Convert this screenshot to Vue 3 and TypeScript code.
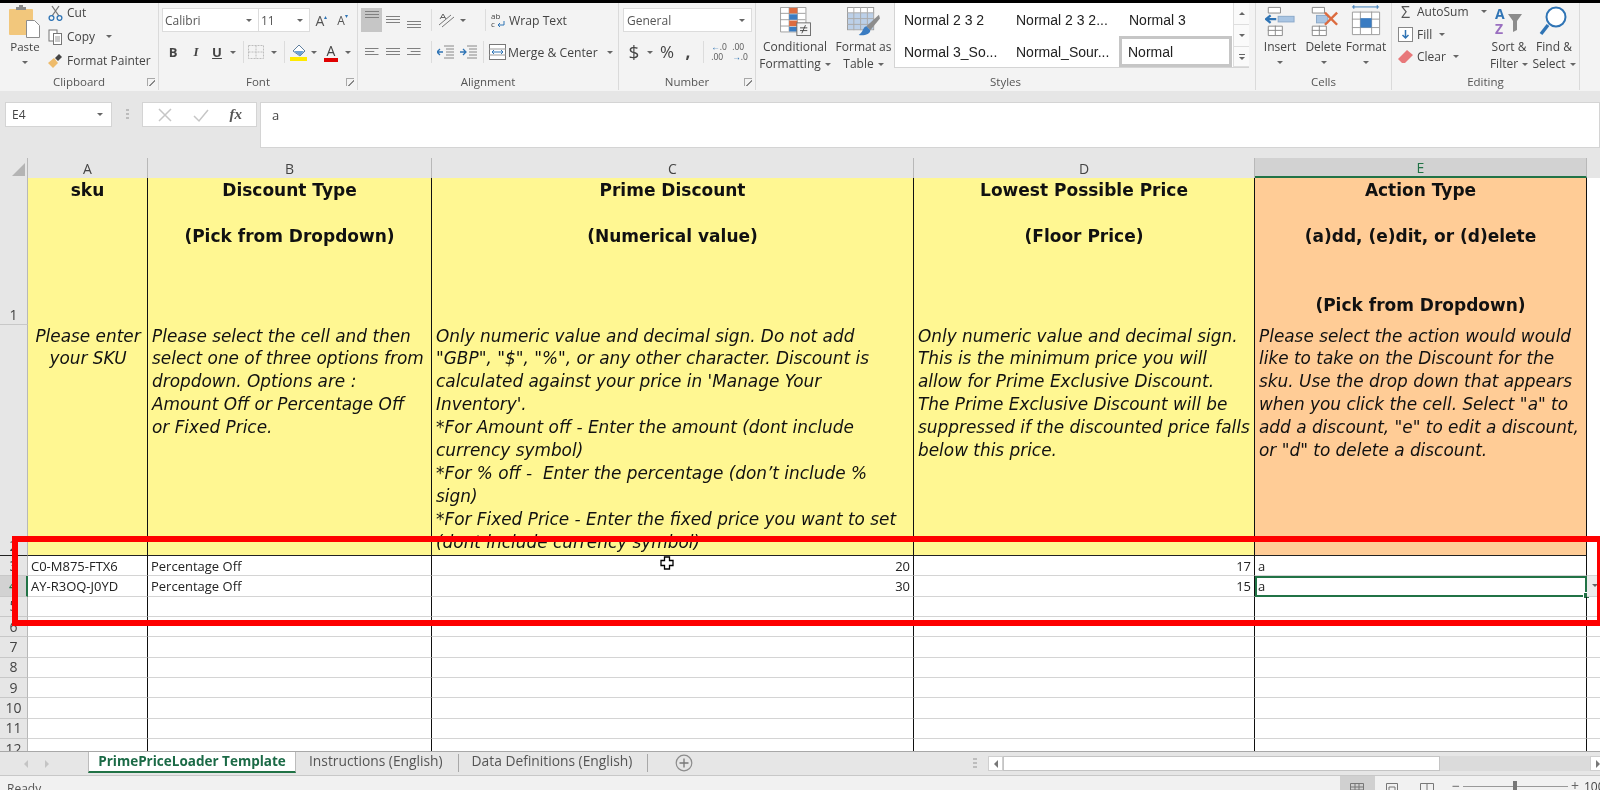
<template>
  <div class="app">
    <div class="topline"></div>

    <div class="ribbon">
      <!-- clipboard -->
      <section class="group g-clip">
        <div class="body clip-body">
          <div class="paste">
            <svg width="32" height="34" viewBox="0 0 32 34">
              <rect x="0" y="4" width="24" height="26" rx="1" fill="#f2c77c" />
              <path d="M7 4V2h3V0h4v2h3v3H7z" fill="#8a8a8a" />
              <path d="M17.500 15.500h8l5 5v12h-13z" fill="#fff" stroke="#8c8c8c" />
            </svg>
            <span class="paste-label">Paste</span>
            <i class="caret"></i>
          </div>
          <div class="clip-list">
            <div class="clip-item">
              <svg width="15" height="16" viewBox="0 0 15 16">
                <path d="M4 1l7 10M11 1L4 11" stroke="#777" stroke-width="1.300" fill="none" />
                <circle cx="3.500" cy="13" r="2.400" fill="none" stroke="#2f74b5" stroke-width="1.300" />
                <circle cx="11.500" cy="13" r="2.400" fill="none" stroke="#2f74b5" stroke-width="1.300" />
              </svg>
              <span>Cut</span>
            </div>
            <div class="clip-item">
              <svg width="15" height="16" viewBox="0 0 15 16">
                <rect x="1" y="1" width="8" height="11" fill="#fff" stroke="#777" />
                <rect x="5.500" y="4.500" width="8" height="11" fill="#fff" stroke="#777" />
                <path d="M7 8h5M7 10h5M7 12h5" stroke="#999" />
              </svg>
              <span>Copy</span>
              <i class="caret copy-caret"></i>
            </div>
            <div class="clip-item">
              <svg width="15" height="14" viewBox="0 0 15 14">
                <path d="M0 9l6-5 4 5-5 5z" fill="#eebb6b" />
                <path d="M7 4l4-4 3 3-4 4z" fill="#444" />
              </svg>
              <span>Format Painter</span>
            </div>
          </div>
        </div>
        <div class="label">Clipboard<i class="launch"></i></div>
      </section>

      <!-- font -->
      <section class="group g-font">
        <div class="body rows">
          <div class="font-r1">
            <div class="select sel-font"><span>Calibri</span><i class="caret"></i></div>
            <div class="select sel-size"><span>11</span><i class="caret"></i></div>
            <span class="grow-a">A<sup>▴</sup></span>
            <span class="grow-a small">A<sup>▾</sup></span>
          </div>
          <div class="font-r2">
            <span class="fmt bold">B</span>
            <span class="fmt ital">I</span>
            <span class="fmt und">U</span>
            <i class="caret"></i>
            <i class="sep"></i>
            <svg width="18" height="16" viewBox="0 0 18 16">
              <path d="M1.500 1.500h15v13h-15zM9 1.500v13M1.500 8h15" fill="none" stroke="#bdbdbd" stroke-dasharray="2 1" />
            </svg>
            <i class="caret"></i>
            <i class="sep"></i>
            <svg width="18" height="20" viewBox="0 0 18 20">
              <path d="M3 9l6-6 6 6-5 5z" fill="#fff" stroke="#5f7f9f" />
              <path d="M4 9h10l-4 5z" fill="#6da2d6" />
              <rect x="0" y="15" width="17" height="4" fill="#ffea00" />
            </svg>
            <i class="caret"></i>
            <span class="color-a">A</span>
            <i class="caret"></i>
          </div>
        </div>
        <div class="label">Font<i class="launch"></i></div>
      </section>

      <!-- alignment -->
      <section class="group g-align">
        <div class="body rows">
          <div class="align-r1">
            <span class="al-btn on"><i class="lines l-top"></i></span>
            <span class="al-btn"><i class="lines l-mid"></i></span>
            <span class="al-btn"><i class="lines l-bot"></i></span>
            <i class="sep"></i>
            <svg width="20" height="16" viewBox="0 0 20 16">
              <path d="M2 13L14 3M5 15l12-10" stroke="#777" fill="none" />
              <path d="M3 7l3-5 3 5M4 5.500h4" stroke="#666" fill="none" />
            </svg>
            <i class="caret"></i>
            <i class="sep s2"></i>
            <svg width="16" height="16" viewBox="0 0 16 16">
              <text x="0" y="7" font-size="8" fill="#444" font-family="Open Sans">ab</text>
              <text x="0" y="15" font-size="8" fill="#444" font-family="Open Sans">c</text>
              <path d="M13 9v4H7m2-2l-2 2 2 2" stroke="#2f74b5" fill="none" />
            </svg>
            <span class="al-text">Wrap Text</span>
          </div>
          <div class="align-r2">
            <span class="al-btn"><i class="lines l-left"></i></span>
            <span class="al-btn"><i class="lines l-center"></i></span>
            <span class="al-btn"><i class="lines l-right"></i></span>
            <i class="sep"></i>
            <svg width="18" height="14" viewBox="0 0 18 14">
              <path d="M7 1h10M9 4h8M9 7h8M9 10h8M7 13h10" stroke="#888" />
              <path d="M6 7H0m3-3L0 7l3 3" stroke="#2f74b5" fill="none" stroke-width="1.300" />
            </svg>
            <svg width="18" height="14" viewBox="0 0 18 14">
              <path d="M7 1h10M9 4h8M9 7h8M9 10h8M7 13h10" stroke="#888" />
              <path d="M0 7h6M3 4l3 3-3 3" stroke="#2f74b5" fill="none" stroke-width="1.300" />
            </svg>
            <i class="sep s2"></i>
            <svg width="17" height="16" viewBox="0 0 17 16">
              <rect x="0.500" y="0.500" width="16" height="15" fill="#fff" stroke="#777" />
              <path d="M0 5h17M0 11h17" stroke="#999" />
              <path d="M3 8h11M5 6L3 8l2 2M12 6l2 2-2 2" stroke="#2f74b5" fill="none" />
            </svg>
            <span class="al-text">Merge &amp; Center</span>
            <i class="caret"></i>
          </div>
        </div>
        <div class="label">Alignment</div>
      </section>

      <!-- number -->
      <section class="group g-num">
        <div class="body rows">
          <div class="select sel-num"><span>General</span><i class="caret"></i></div>
          <div class="num-r2">
            <span class="num-sym big">$</span>
            <i class="caret"></i>
            <span class="num-sym">%</span>
            <span class="num-sym comma">,</span>
            <i class="sep"></i>
            <span class="dec"><b>←</b>.0<br />.00</span>
            <span class="dec">.00<br /><b>→</b>.0</span>
          </div>
        </div>
        <div class="label">Number<i class="launch"></i></div>
      </section>

      <!-- styles -->
      <section class="group g-styles">
        <div class="body styles-body">
          <div class="big-btn w-cond">
            <svg width="31" height="29" viewBox="0 0 34 32">
              <path d="M.500.500h28v27H.500zM10 0v27M19 0v27M0 7h28M0 14h28M0 21h28" fill="#fff" stroke="#999" />
              <rect x="10" y="1" width="9" height="6" fill="#dc6b3f" />
              <rect x="10" y="8" width="9" height="6" fill="#3a7cc2" />
              <rect x="10" y="15" width="9" height="6" fill="#dc6b3f" />
              <rect x="10" y="22" width="9" height="5" fill="#3a7cc2" />
              <rect x="18.500" y="17.500" width="15" height="14" fill="#f4f4f4" stroke="#666" />
              <path d="M22 23h8M22 26h8M24 29l4-9" stroke="#444" fill="none" />
            </svg>
            <span class="big-text">Conditional<br />Formatting<i class="caret"></i></span>
          </div>
          <div class="big-btn w-table">
            <svg width="33" height="29" viewBox="0 0 34 30">
              <rect x="0.500" y="0.500" width="27" height="23" fill="#fff" stroke="#999" />
              <rect x="1" y="6" width="26" height="17" fill="#bcd0e8" />
              <path d="M7 0v24M14 0v24M21 0v24M0 6h28M0 12h28M0 18h28" stroke="#aaa" />
              <path d="M33 8L20 20l4 4L34 12z" fill="#8c8c8c" />
              <path d="M20 20c-4 1-3 6-8 9 6 1 12-1 12-5z" fill="#3a7cc2" />
            </svg>
            <span class="big-text">Format as<br />Table<i class="caret"></i></span>
          </div>
          <div class="gallery">
            <div class="gal-grid">
              <span v-for="s in galleryStyles" :key="s" class="gal-cell" :class="{ 'gal-on': s === 'Normal' }">{{ s }}</span>
            </div>
            <div class="gal-scroll">
              <span><i class="caret up"></i></span>
              <span><i class="caret"></i></span>
              <span class="more"><i class="dash"></i><i class="caret"></i></span>
            </div>
          </div>
        </div>
        <div class="label">Styles</div>
      </section>

      <!-- cells -->
      <section class="group g-cells">
        <div class="body cells-body">
          <div class="cell-btn">
            <svg width="30" height="30" viewBox="0 0 32 32">
              <path d="M3.500 1.500h13v6h-13zM3.500 21.500h15v10h-15zM11 21v10M3 26h15" fill="#fff" stroke="#888" />
              <rect x="14" y="11" width="17" height="6" fill="#a9c5e3" stroke="#89a7c8" />
              <path d="M12 14H2m4-4l-5 4 5 4" stroke="#2f74b5" stroke-width="2.400" fill="none" />
            </svg>
            <span>Insert</span>
            <i class="caret"></i>
          </div>
          <div class="cell-btn">
            <svg width="30" height="30" viewBox="0 0 32 32">
              <path d="M3.500 1.500h13v6h-13zM3.500 21.500h15v10h-15zM11 21v10M3 26h15" fill="#fff" stroke="#888" />
              <rect x="8" y="10" width="12" height="8" fill="#a9c5e3" stroke="#89a7c8" />
              <path d="M17 7l13 13M30 7L17 20" stroke="#dc6b3f" stroke-width="2.600" />
            </svg>
            <span>Delete</span>
            <i class="caret"></i>
          </div>
          <div class="cell-btn">
            <svg width="30" height="32" viewBox="0 0 32 34">
              <path d="M1 2h29M3 0v4M28 0v4" stroke="#2f74b5" />
              <path d="M1.500 7.500h29v24h-29zM10 7v24M22 7v24M1 15h29M1 24h29" fill="#fff" stroke="#999" />
              <rect x="10" y="14" width="12" height="10" fill="#3a7cc2" />
            </svg>
            <span>Format</span>
            <i class="caret"></i>
          </div>
        </div>
        <div class="label">Cells</div>
      </section>

      <!-- editing -->
      <section class="group g-edit">
        <div class="body edit-body">
          <div class="edit-list">
            <div class="edit-item">
              <span class="sigma">Σ</span><span>AutoSum</span><i class="caret m-auto"></i>
            </div>
            <div class="edit-item">
              <svg width="15" height="15" viewBox="0 0 15 15">
                <rect x="0.500" y="0.500" width="14" height="14" fill="#fff" stroke="#888" />
                <path d="M7.500 3v8M4.500 8l3 3 3-3" stroke="#2f74b5" stroke-width="1.500" fill="none" />
              </svg>
              <span>Fill</span><i class="caret"></i>
            </div>
            <div class="edit-item">
              <svg width="15" height="14" viewBox="0 0 15 14">
                <path d="M0 9l9-9 6 5-8 8H4z" fill="#e8787a" />
              </svg>
              <span>Clear</span><i class="caret"></i>
            </div>
          </div>
          <div class="cell-btn sort">
            <svg width="30" height="30" viewBox="0 0 30 30">
              <text x="1" y="13" font-size="14" font-weight="700" fill="#2f74b5" font-family="Open Sans">A</text>
              <text x="1" y="28" font-size="14" font-weight="700" fill="#9a6fc0" font-family="Open Sans">Z</text>
              <path d="M14 8h14l-5 7v9l-4 2V15z" fill="#8c8c8c" />
            </svg>
            <span>Sort &amp;</span>
            <span>Filter<i class="caret"></i></span>
          </div>
          <div class="cell-btn find">
            <svg width="30" height="30" viewBox="0 0 30 32">
              <circle cx="17" cy="12" r="9.500" fill="#fff" stroke="#2f74b5" stroke-width="2" />
              <path d="M9 20L2 29" stroke="#2f74b5" stroke-width="3.400" />
            </svg>
            <span>Find &amp;</span>
            <span>Select<i class="caret"></i></span>
          </div>
        </div>
        <div class="label">Editing</div>
      </section>
    </div>

    <!-- formula bar -->
    <div class="formula">
      <div class="name-box"><span>E4</span><i class="caret"></i></div>
      <div class="fx-dots"></div>
      <div class="fx-box">
        <svg width="16" height="16" viewBox="0 0 16 16"><path d="M2 2l12 12M14 2L2 14" stroke="#c6c6c6" stroke-width="1.500" /></svg>
        <svg width="16" height="16" viewBox="0 0 16 16"><path d="M1 9l5 5 9-11" stroke="#c6c6c6" stroke-width="1.500" fill="none" /></svg>
        <span class="fx">fx</span>
      </div>
      <div class="fx-input">a</div>
    </div>

    <!-- sheet -->
    <div class="sheet">
      <div class="corner"><i></i></div>
      <div v-for="c in columns" :key="c" class="col-head" :class="{ active: c === 'E' }">{{ c }}</div>
      <div class="col-head blank"></div>

      <div class="row-head r1">1</div>
      <div v-for="(h, i) in titles" :key="'t' + i" class="hd title" :class="{ orange: i === 4 }">
        <div v-for="(l, j) in h" :key="j" class="line">{{ l || '\u00a0' }}</div>
      </div>
      <div class="gutter"></div>

      <div class="row-head r2">2</div>
      <div v-for="(n, i) in notes" :key="'n' + i" class="hd note" :class="{ orange: i === 4, centered: i === 0 }">
        <div v-for="(l, j) in n" :key="j" class="line">{{ l }}</div>
      </div>
      <div class="gutter"></div>

      <template v-for="r in rows" :key="r.n">
        <div class="row-head rn" :class="{ cur: r.n === 4 }">{{ r.n }}</div>
        <div class="td">{{ r.sku }}</div>
        <div class="td">{{ r.type }}</div>
        <div class="td num">{{ r.disc }}</div>
        <div class="td num">{{ r.floor }}</div>
        <div class="td" :class="{ selected: r.n === 4 }">{{ r.act }}<i v-if="r.n === 4" class="handle"></i></div>
        <div class="td extra" :class="{ 'dd-cell': r.n === 4 }"><i v-if="r.n === 4" class="caret"></i></div>
      </template>
    </div>

    <!-- tab bar -->
    <div class="tabs">
      <div class="nav"><i class="tri left"></i><i class="tri right"></i></div>
      <div class="tab active">PrimePriceLoader Template</div>
      <div class="tab">Instructions (English)</div>
      <i class="tab-sep"></i>
      <div class="tab">Data Definitions (English)</div>
      <i class="tab-sep"></i>
      <div class="add">
        <svg width="18" height="18" viewBox="0 0 18 18">
          <circle cx="9" cy="9" r="7.800" fill="none" stroke="#8c8c8c" stroke-width="1.200" />
          <path d="M9 4.500v9M4.500 9h9" stroke="#777" stroke-width="1.300" />
        </svg>
      </div>
      <div class="hscroll">
        <i class="grip"></i>
        <span class="sb-btn"><i class="tri left dark"></i></span>
        <span class="sb-thumb"></span>
        <span class="sb-track"></span>
        <span class="sb-btn"><i class="tri right dark"></i></span>
      </div>
    </div>

    <!-- status bar -->
    <div class="status">
      <span class="ready">Ready</span>
      <span class="view on">
        <svg width="14" height="12" viewBox="0 0 14 12"><path d="M.500 2.500h13v10H.500zM5 2v10M9 2v10M0 6h14M0 9h14" fill="none" stroke="#777" /></svg>
      </span>
      <span class="view">
        <svg width="12" height="12" viewBox="0 0 12 12"><path d="M.500 2.500h11v10H.500zM3 6h6v6H3z" fill="none" stroke="#777" /></svg>
      </span>
      <span class="view">
        <svg width="14" height="12" viewBox="0 0 14 12"><path d="M.500 2.500h13v10H.500zM7 2v10" fill="none" stroke="#777" /></svg>
      </span>
      <span class="zoom-bar"><b>−</b><i class="slider"><u></u></i><b>+</b></span>
      <span class="pct">100%</span>
    </div>

    <!-- annotation and mouse pointer laid over the sheet -->
    <div class="red-box"></div>
    <svg class="pointer" width="14" height="14" viewBox="0 0 14 14">
      <path d="M4.500 1h5v3.500H13v5H9.500V13h-5V9.500H1v-5h3.500z" fill="#fff" stroke="#000" stroke-width="1.300" />
    </svg>
  </div>
</template>

<script setup lang="ts">
interface SheetRow {
  n: number
  sku: string
  type: string
  disc: string
  floor: string
  act: string
}

const columns = ['A', 'B', 'C', 'D', 'E']

const galleryStyles = [
  'Normal 2 3 2',
  'Normal 2 3 2...',
  'Normal 3',
  'Normal 3_So...',
  'Normal_Sour...',
  'Normal',
]

const titles: string[][] = [
  ['sku'],
  ['Discount Type', '', '(Pick from Dropdown)'],
  ['Prime Discount', '', '(Numerical value)'],
  ['Lowest Possible Price', '', '(Floor Price)'],
  ['Action Type', '', '(a)dd, (e)dit, or (d)elete', '', '', '(Pick from Dropdown)'],
]

const notes: string[][] = [
  ['Please enter', 'your SKU'],
  [
    'Please select the cell and then',
    'select one of three options from',
    'dropdown. Options are :',
    'Amount Off or Percentage Off',
    'or Fixed Price.',
  ],
  [
    'Only numeric value and decimal sign. Do not add',
    '"GBP", "$", "%", or any other character. Discount is',
    "calculated against your price in 'Manage Your",
    "Inventory'.",
    '*For Amount off - Enter the amount (dont include',
    'currency symbol)',
    '*For % off -  Enter the percentage (don’t include %',
    'sign)',
    '*For Fixed Price - Enter the fixed price you want to set',
    '(dont include currency symbol)',
  ],
  [
    'Only numeric value and decimal sign.',
    'This is the minimum price you will',
    'allow for Prime Exclusive Discount.',
    'The Prime Exclusive Discount will be',
    'suppressed if the discounted price falls',
    'below this price.',
  ],
  [
    'Please select the action would would',
    'like to take on the Discount for the',
    'sku. Use the drop down that appears',
    'when you click the cell. Select "a" to',
    'add a discount, "e" to edit a discount,',
    'or "d" to delete a discount.',
  ],
]

const rows: SheetRow[] = [
  { n: 3, sku: 'C0-M875-FTX6', type: 'Percentage Off', disc: '20', floor: '17', act: 'a' },
  { n: 4, sku: 'AY-R3OQ-J0YD', type: 'Percentage Off', disc: '30', floor: '15', act: 'a' },
  ...[5, 6, 7, 8, 9, 10, 11, 12].map((n) => ({ n, sku: '', type: '', disc: '', floor: '', act: '' })),
]
</script>

<style>
html,
body {
  margin: 0;
  overflow: hidden;
  background: #e6e6e6;
}
</style>

<style scoped>
.app {
  position: relative;
  width: 1600px;
  height: 790px;
  overflow: hidden;
  display: flex;
  flex-direction: column;
  background: #e6e6e6;
  color: #444;
  font-family: "Open Sans", "Liberation Sans", sans-serif;
  font-size: 12px;
  filter: blur(0.3px);
}
.topline {
  height: 3px;
  background: #000;
  flex: none;
}
.caret {
  display: inline-block;
  width: 0;
  height: 0;
  border-left: 3px solid transparent;
  border-right: 3px solid transparent;
  border-top: 3px solid #666;
}
.caret.up {
  border-top: 0;
  border-bottom: 3px solid #666;
}
.sep {
  display: block;
  width: 1px;
  height: 22px;
  background: #dcdcdc;
}

/* ribbon */
.ribbon {
  height: 88px;
  flex: none;
  display: flex;
  background: #f3f3f3;
}
.group {
  position: relative;
  display: flex;
  flex-direction: column;
  box-sizing: border-box;
  border-right: 1px solid #dadada;
  height: 87px;
}
.body {
  flex: 1;
  min-height: 0;
}
.label {
  position: relative;
  height: 16px;
  line-height: 16px;
  text-align: center;
  font-size: 11.500px;
  color: #555;
}
.launch {
  position: absolute;
  right: 3px;
  top: 4px;
  width: 7px;
  height: 7px;
  border-left: 1px solid #a8a8a8;
  border-top: 1px solid #a8a8a8;
  background: linear-gradient(135deg, transparent 55%, #888 55%, #888 70%, transparent 70%);
}
.g-clip { width: 159px; }
.g-font { width: 199px; }
.g-align { width: 261px; }
.g-num { width: 137px; }
.g-styles { width: 500px; }
.g-cells { width: 136px; }
.g-edit { width: 188px; }
.rows {
  display: flex;
  flex-direction: column;
  gap: 8px;
  padding-top: 5px;
}
.select {
  display: flex;
  align-items: center;
  justify-content: space-between;
  box-sizing: border-box;
  height: 24px;
  padding: 0 6px 0 2px;
  background: #fff;
  border: 1px solid #dcdcdc;
  font-size: 12px;
  color: #555;
}

/* clipboard */
.clip-body {
  display: flex;
  padding-left: 8px;
}
.paste {
  width: 34px;
  display: flex;
  flex-direction: column;
  align-items: center;
  padding-top: 2px;
}
.paste-label {
  font-size: 11.500px;
  line-height: 16px;
  margin-top: 0;
}
.paste .caret {
  margin-top: 6px;
}
.clip-list {
  margin-left: 6px;
  display: flex;
  flex-direction: column;
  gap: 7px;
  padding-top: 1px;
}
.clip-item {
  display: flex;
  align-items: center;
  gap: 4px;
  height: 17px;
  font-size: 12px;
  white-space: nowrap;
}
.copy-caret {
  margin-left: 7px;
}

/* font */
.g-font .rows {
  padding-left: 3px;
}
.font-r1 {
  display: grid;
  grid-template-columns: 96px 52px 21px 21px;
  align-items: center;
}
.sel-font { border-right: 0; }
.grow-a {
  text-align: center;
  font-size: 14px;
  padding-left: 2px;
  color: #555;
}
.grow-a.small { font-size: 12px; }
.grow-a sup {
  font-size: 6px;
  color: #2f74b5;
  vertical-align: 7px;
  line-height: 0;
}
.font-r2 {
  display: grid;
  grid-template-columns: 22px 24px 18px 14px 6px 20px 15px 6px 24px 6px 28px 6px;
  align-items: center;
  justify-items: center;
  height: 24px;
}
.fmt {
  font-size: 13px;
  color: #444;
}
.bold { font-weight: 700; }
.ital { font-style: italic; font-family: "Liberation Serif", serif; font-weight: 700; }
.und { text-decoration: underline; font-weight: 700; }
.color-a {
  font-size: 14px;
  line-height: 15px;
  border-bottom: 4px solid #e00000;
  padding: 0 3px;
}

/* alignment */
.g-align .rows { padding-left: 3px; }
.align-r1,
.align-r2 {
  display: flex;
  align-items: center;
  height: 24px;
}
.al-btn {
  width: 21px;
  height: 24px;
  display: flex;
  align-items: center;
  justify-content: center;
}
.al-btn.on { background: #c6c6c6; }
.lines {
  display: block;
  width: 14px;
  height: 9px;
  background: repeating-linear-gradient(#808080 0 1px, transparent 1px 3px);
}
.l-top { transform: translateY(-5px); }
.l-bot { transform: translateY(5px); }
.l-left { clip-path: polygon(0 0, 100% 0, 100% 33%, 70% 33%, 70% 67%, 100% 67%, 100% 100%, 0 100%); }
.l-right { clip-path: polygon(0 0, 100% 0, 100% 100%, 0 100%, 0 67%, 30% 67%, 30% 33%, 0 33%); }
.align-r1 .sep { margin: 0 5px 0 7px; }
.align-r1 svg { flex: none; }
.align-r1 .caret { margin-left: 3px; }
.align-r1 .s2 { margin: 0 5px 0 19px; }
.align-r2 .sep { margin: 0 5px 0 7px; }
.align-r2 svg + svg { margin-left: 5px; }
.align-r2 .s2 { margin: 0 5px 0 5px; }
.al-text {
  margin-left: 2px;
  white-space: nowrap;
  font-size: 12.200px;
}
.align-r2 .caret { margin-left: 9px; }

/* number */
.g-num .rows { padding-left: 4px; }
.sel-num {
  width: 129px;
  padding-left: 3px;
}
.num-r2 {
  display: grid;
  grid-template-columns: 22px 10px 24px 18px 12px 20px 22px;
  align-items: center;
  justify-items: center;
  height: 24px;
}
.num-sym {
  font-size: 17px;
  line-height: 20px;
}
.num-sym.big { font-size: 19px; }
.num-sym.comma {
  font-weight: 700;
  line-height: 14px;
}
.dec {
  font-size: 8.500px;
  line-height: 10px;
  color: #555;
  white-space: nowrap;
}
.dec b { color: #2f74b5; }

/* styles */
.styles-body {
  display: flex;
}
.big-btn {
  display: flex;
  flex-direction: column;
  align-items: center;
  padding-top: 4px;
  box-sizing: border-box;
}
.w-cond { width: 78px; }
.w-table { width: 59px; }
.big-text {
  margin-top: 2px;
  text-align: center;
  line-height: 17px;
  font-size: 12px;
  white-space: nowrap;
}
.big-text .caret { margin-left: 4px; vertical-align: 2px; }
.gallery {
  width: 355px;
  height: 65px;
  margin-left: 1px;
  display: flex;
  background: #fff;
  border-bottom: 1px solid #d4d4d4;
  border-left: 1px solid #d4d4d4;
  box-sizing: border-box;
}
.gal-grid {
  flex: 1;
  display: grid;
  grid-template-columns: 112px 113px 113px;
  grid-template-rows: 33px 31px;
  padding-left: 0;
}
.gal-cell {
  display: flex;
  align-items: center;
  padding-left: 9px;
  font-family: "Liberation Sans", sans-serif;
  font-size: 14px;
  color: #222;
  white-space: nowrap;
}
.gal-on {
  box-sizing: border-box;
  width: 113px;
  margin-left: -1px;
  padding-left: 6px;
  border: 3px solid #c6c6c6;
}
.gal-scroll {
  width: 16px;
  display: grid;
  grid-template-rows: 22px 22px 20px;
  border-left: 1px solid #dedede;
  background: #fafafa;
}
.gal-scroll span {
  display: flex;
  flex-direction: column;
  gap: 2px;
  align-items: center;
  justify-content: center;
  border-bottom: 1px solid #dedede;
}
.dash {
  width: 6px;
  height: 1px;
  background: #666;
}

/* cells */
.cells-body {
  display: grid;
  grid-template-columns: 44px 43px 42px;
  padding-left: 2px;
}
.cell-btn {
  display: flex;
  flex-direction: column;
  align-items: center;
  white-space: nowrap;
  font-size: 12px;
  line-height: 17px;
}
.cell-btn svg {
  flex: none;
  height: 32px;
  margin-top: 2px;
  margin-bottom: 1px;
}
.cell-btn > .caret {
  margin-top: 6px;
}
.cell-btn span .caret {
  margin-left: 4px;
  vertical-align: 2px;
}

/* editing */
.edit-body {
  display: flex;
  padding-left: 6px;
}
.edit-list {
  width: 89px;
  display: flex;
  flex-direction: column;
  gap: 5.700px;
  padding-top: 0;
}
.edit-item {
  display: flex;
  align-items: center;
  gap: 4px;
  height: 17px;
}
.edit-item .caret { margin-left: 3px; }
.edit-item .m-auto { margin-left: 8px; }
.sigma {
  width: 15px;
  font-size: 16px;
  line-height: 16px;
  text-align: center;
  color: #555;
}
.sort { width: 44px; }
.find { width: 46px; margin-left: 0; }

/* formula bar */
.formula {
  flex: none;
  height: 67px;
  display: flex;
  align-items: flex-start;
  padding-top: 11px;
  box-sizing: border-box;
  background: #e6e6e6;
}
.name-box {
  width: 107px;
  height: 25px;
  margin-left: 5px;
  box-sizing: border-box;
  display: flex;
  align-items: center;
  justify-content: space-between;
  padding: 0 8px 0 6px;
  background: #fff;
  border: 1px solid #d4d4d4;
  font-size: 12px;
}
.fx-dots {
  width: 3px;
  height: 12px;
  margin: 7px 13px 0 14px;
  background: repeating-linear-gradient(#bcbcbc 0 2px, transparent 2px 4px);
}
.fx-box {
  width: 115px;
  height: 25px;
  box-sizing: border-box;
  display: flex;
  align-items: center;
  justify-content: space-around;
  background: #fff;
  border: 1px solid #d4d4d4;
  padding: 0 4px;
}
.fx {
  font-family: "Liberation Serif", serif;
  font-style: italic;
  font-weight: 700;
  font-size: 15px;
  color: #555;
}
.fx-input {
  flex: 1;
  height: 46px;
  margin-left: 3px;
  box-sizing: border-box;
  padding: 3px 11px;
  background: #fff;
  border: 1px solid #d4d4d4;
  font-size: 13px;
}

/* sheet */
.sheet {
  flex: none;
  height: 594px;
  overflow: hidden;
  display: grid;
  grid-template-columns: 28px 120px 284px 482px 341px 332px 13px;
  grid-template-rows: 20px 146.500px 231.500px repeat(10, 20.330px);
  background: #fff;
  border-bottom: 1px solid #a8a8a8;
  box-sizing: border-box;
  font-size: 13px;
}
.corner {
  position: relative;
  background: #e6e6e6;
  border-right: 1px solid #b8b8b8;
}
.corner i {
  position: absolute;
  right: 2px;
  bottom: 2px;
  width: 0;
  height: 0;
  border-left: 13px solid transparent;
  border-bottom: 13px solid #b4b4b4;
}
.col-head {
  display: flex;
  align-items: center;
  justify-content: center;
  background: #e6e6e6;
  border-right: 1px solid #b8b8b8;
  box-sizing: border-box;
  color: #444;
  font-size: 14px;
}
.col-head.blank { border-right: 0; }
.col-head.active {
  background: #d2d2d2;
  color: #217346;
  border-bottom: 2px solid #217346;
}
.row-head {
  display: flex;
  align-items: flex-end;
  justify-content: center;
  box-sizing: border-box;
  background: #e6e6e6;
  border-right: 1px solid #b8b8b8;
  border-bottom: 1px solid #c8c8c8;
  color: #444;
  font-size: 14px;
  line-height: 18px;
}
.rn { align-items: center; }
.row-head.cur {
  background: #d2d2d2;
  color: #217346;
  border-right: 2px solid #217346;
}
.hd {
  box-sizing: border-box;
  background: #fff792;
  border-right: 1px solid #111;
  color: #111;
  font-family: "DejaVu Sans", Verdana, sans-serif;
  line-height: 22.900px;
  overflow: visible;
  padding: 0 3px;
  white-space: pre;
}
.hd.orange { background: #ffcc96; }
.title {
  text-align: center;
  font-weight: 700;
  font-size: 17px;
  padding-top: 1px;
}
.note {
  font-style: italic;
  font-size: 16.900px;
  padding-left: 4px;
  border-bottom: 1px solid #222;
}
.note.centered { text-align: center; }
.r2 { border-bottom: 1px solid #222; }
.gutter { background: #fff; }
.td {
  position: relative;
  box-sizing: border-box;
  padding: 0 3px;
  border-right: 1px solid #111;
  border-bottom: 1px solid #d4d4d4;
  color: #222;
  font-size: 13px;
  line-height: 20px;
  white-space: nowrap;
}
.td.num { text-align: right; }
.td.extra { border-right: 0; }
.td.selected {
  border: 0;
  box-shadow: inset 0 0 0 2px #217346;
  padding-left: 3px;
}
.handle {
  position: absolute;
  right: -3px;
  bottom: -2px;
  width: 5px;
  height: 5px;
  background: #217346;
  border: 1px solid #fff;
}
.dd-cell {
  display: flex;
  align-items: center;
  justify-content: center;
  background: #ececec;
  padding-left: 6px;
}

/* tabs */
.tabs {
  flex: none;
  height: 24px;
  display: flex;
  align-items: flex-start;
  background: #e6e6e6;
  border-bottom: 1px solid #c8c8c8;
  box-sizing: border-box;
}
.nav {
  width: 88px;
  height: 23px;
  display: flex;
  align-items: center;
  gap: 17px;
  padding-left: 24px;
  box-sizing: border-box;
}
.tri {
  display: block;
  width: 0;
  height: 0;
  border-top: 4px solid transparent;
  border-bottom: 4px solid transparent;
}
.tri.left { border-right: 4px solid #c4c4c4; }
.tri.right { border-left: 4px solid #c4c4c4; }
.tri.dark.left { border-right-color: #777; }
.tri.dark.right { border-left-color: #777; }
.tab {
  flex: none;
  height: 21px;
  line-height: 18px;
  font-size: 13.800px;
  color: #555;
  white-space: nowrap;
}
.tab:nth-child(3) { margin-left: 13px; }
.tab:nth-child(5) { margin-left: 13px; }
.tab.active {
  box-sizing: border-box;
  width: 208px;
  background: #fff;
  border-bottom: 2px solid #217346;
  border-left: 1px solid #bcbcbc;
  border-right: 1px solid #bcbcbc;
  color: #1b6a46;
  font-size: 13.500px;
  font-weight: 700;
  text-align: center;
}
.tab-sep {
  flex: none;
  width: 1px;
  height: 18px;
  margin: 2px 0 0 15px;
  background: #a8a8a8;
}
.add {
  margin: 2px 0 0 27px;
  height: 18px;
}
.hscroll {
  flex: none;
  display: flex;
  align-items: stretch;
  width: 632px;
  height: 15px;
  margin: 4px -5px 0 auto;
}
.grip {
  width: 4px;
  height: 12px;
  margin: 2px 11px 0 0;
  background: repeating-linear-gradient(#bdbdbd 0 2px, transparent 2px 4px);
}
.sb-btn {
  flex: none;
  width: 15px;
  display: flex;
  align-items: center;
  justify-content: center;
  background: #fff;
  border: 1px solid #cfcfcf;
  box-sizing: border-box;
}
.sb-thumb {
  width: 437px;
  background: #fff;
  border: 1px solid #c4c4c4;
  box-sizing: border-box;
}
.sb-track {
  flex: 1;
  background: #dbdbdb;
}

/* status */
.status {
  flex: 1;
  display: flex;
  align-items: flex-start;
  background: #f1f1f1;
  font-size: 12px;
  overflow: hidden;
}
.ready {
  margin: 5px auto 0 7px;
  line-height: 16px;
  color: #555;
}
.view {
  display: flex;
  justify-content: center;
  width: 35px;
  height: 14px;
  padding-top: 5px;
  box-sizing: border-box;
}
.view.on {
  background: #d0d0d0;
}
.zoom-bar {
  display: flex;
  align-items: flex-start;
  margin-left: 7px;
  padding-top: 4px;
  gap: 3px;
  color: #666;
  line-height: 12px;
}
.zoom-bar b {
  font-weight: 400;
  font-size: 14px;
}
.slider {
  position: relative;
  display: block;
  width: 105px;
  height: 1px;
  margin-top: 6px;
  background: #999;
}
.slider u {
  position: absolute;
  left: 50px;
  top: -5px;
  width: 4px;
  height: 11px;
  background: #777;
}
.pct {
  margin-left: 5px;
  width: 16px;
  margin-top: 4px;
  line-height: 14px;
  overflow: hidden;
  white-space: nowrap;
}

/* overlays */
.red-box {
  position: absolute;
  left: 12px;
  top: 536px;
  width: 1591px;
  height: 90px;
  box-sizing: border-box;
  border: 6.500px solid #fe0000;
  pointer-events: none;
}
.pointer {
  position: absolute;
  left: 660px;
  top: 556px;
}
</style>
